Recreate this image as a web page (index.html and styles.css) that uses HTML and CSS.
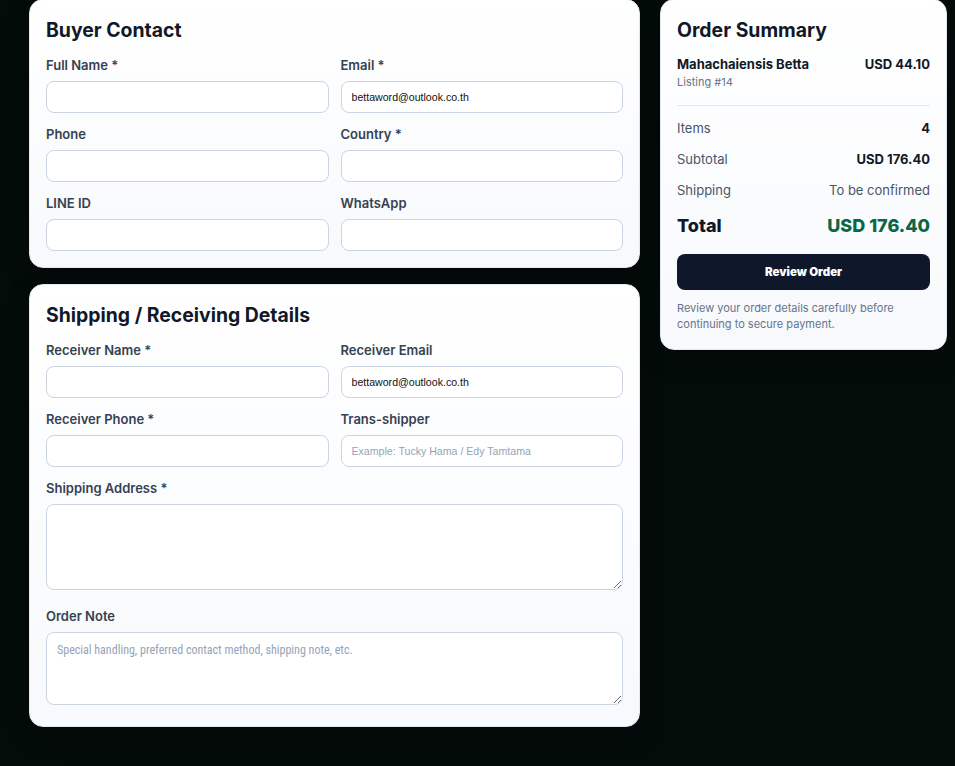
FILE: index.html
```html
<!DOCTYPE html>
<html lang="en">
<head>
<meta charset="utf-8">
<title>Checkout</title>
<link rel="stylesheet" href="styles.css">
</head>
<body>
<div class="page">
  <div class="main">
    <section class="card">
      <h2 class="card-title">Buyer Contact</h2>
      <div class="grid">
        <label class="field"><span class="label">Full Name *</span><input class="input" type="text"></label>
        <label class="field"><span class="label">Email *</span><input class="input" type="email" value="bettaword@outlook.co.th"></label>
        <label class="field"><span class="label">Phone</span><input class="input" type="text"></label>
        <label class="field"><span class="label">Country *</span><input class="input" type="text"></label>
        <label class="field"><span class="label">LINE ID</span><input class="input" type="text"></label>
        <label class="field"><span class="label">WhatsApp</span><input class="input" type="text"></label>
      </div>
    </section>
    <section class="card">
      <h2 class="card-title">Shipping / Receiving Details</h2>
      <div class="grid">
        <label class="field"><span class="label">Receiver Name *</span><input class="input" type="text"></label>
        <label class="field"><span class="label">Receiver Email</span><input class="input" type="email" value="bettaword@outlook.co.th"></label>
        <label class="field"><span class="label">Receiver Phone *</span><input class="input" type="text"></label>
        <label class="field"><span class="label">Trans-shipper</span><input class="input" type="text" placeholder="Example: Tucky Hama / Edy Tamtama"></label>
        <label class="field wide"><span class="label">Shipping Address *</span><textarea class="textarea tall"></textarea></label>
        <label class="field wide"><span class="label">Order Note</span><textarea class="textarea note" placeholder="Special handling, preferred contact method, shipping note, etc."></textarea></label>
      </div>
    </section>
  </div>
  <aside class="card summary">
    <h2 class="card-title">Order Summary</h2>
    <div class="item">
      <div>
        <div class="item-name">Mahachaiensis Betta</div>
        <div class="item-sub">Listing #14</div>
      </div>
      <div class="item-price">USD 44.10</div>
    </div>
    <div class="rows">
      <div class="row"><span>Items</span><strong>4</strong></div>
      <div class="row"><span>Subtotal</span><strong>USD 176.40</strong></div>
      <div class="row"><span>Shipping</span><span>To be confirmed</span></div>
    </div>
    <div class="total"><span>Total</span><span class="total-value">USD 176.40</span></div>
    <button class="btn" type="button">Review Order</button>
    <p class="note-text">Review your order details carefully before continuing to secure payment.</p>
  </aside>
</div>
</body>
</html>
```

FILE: styles.css
```css
* { box-sizing: border-box; }
html, body { margin: 0; padding: 0; }
body {
  background: #040c0a;
  font-family: Inter, "Noto Sans", sans-serif;
  color: #0f172a;
  min-height: 766px;
}
.page {
  display: grid;
  grid-template-columns: 611px 287px;
  gap: 20px;
  margin-top: -1px;
  padding: 0 8px 0 29px;
  align-items: start;
}
.main {
  display: flex;
  flex-direction: column;
  gap: 16px;
}
.card {
  background: linear-gradient(180deg, #ffffff 0%, #f7f9fc 100%);
  border: 1px solid #e2e8f0;
  border-radius: 14px;
  padding: 16px;
  box-shadow: 0 10px 24px rgba(0,0,0,0.25);
}
.summary { padding-bottom: 17px; }
.card-title {
  margin: 0 0 11px;
  font-size: 19.4px;
  line-height: 28px;
  font-weight: 700;
  color: #111827;
}
.grid {
  display: grid;
  grid-template-columns: 1fr 1fr;
  column-gap: 12px;
  row-gap: 11px;
}
.field {
  display: flex;
  flex-direction: column;
  gap: 6px;
}
.field.wide { grid-column: 1 / -1; }
.label {
  font-size: 13px;
  line-height: 20px;
  font-weight: 600;
  color: #374151;
}
.input, .textarea {
  width: 100%;
  border: 1px solid #cbd5e1;
  border-radius: 8px;
  background: #fff;
  font-family: "Liberation Sans", Arial, sans-serif;
  font-size: 10.6px;
  color: #111;
  padding: 0 10px;
}
.input { height: 32px; }
.input::placeholder { color: #94a3b8; }
.textarea {
  resize: vertical;
  margin-bottom: 5px;
  padding: 9px 10px;
  font-family: Roboto, sans-serif;
  font-stretch: 75%;
  font-size: 12px;
  line-height: 16px;
}
.textarea::placeholder { color: #94a3b8; }
.tall { height: 86px; }
.note { height: 73px; }
.item {
  display: flex;
  justify-content: space-between;
  align-items: flex-start;
  margin-top: 1px;
  padding-bottom: 14px;
  border-bottom: 1px solid #e2e8f0;
}
.item-name { font-size: 13px; line-height: 18px; font-weight: 700; color: #111827; }
.item-sub { font-size: 11px; line-height: 18px; color: #64748b; }
.item-price { font-size: 13px; line-height: 18px; font-weight: 700; color: #111827; }
.rows {
  display: flex;
  flex-direction: column;
  gap: 11px;
  padding-top: 12px;
}
.row {
  display: flex;
  justify-content: space-between;
  font-size: 13px;
  line-height: 20px;
  color: #475569;
}
.row strong { color: #111827; font-weight: 700; }
.total {
  display: flex;
  justify-content: space-between;
  align-items: center;
  margin-top: 14px;
  font-size: 18px;
  line-height: 24px;
  font-weight: 800;
  color: #111827;
}
.total-value { color: #0b6647; }
.btn {
  display: block;
  width: 100%;
  height: 36px;
  margin-top: 16px;
  border: 0;
  border-radius: 8px;
  background: #0f172a;
  color: #fff;
  font-family: Inter, sans-serif;
  font-size: 11.5px;
  font-weight: 900;
}
.note-text {
  margin: 10px 0 0;
  font-size: 11px;
  line-height: 16px;
  color: #64748b;
}
```
